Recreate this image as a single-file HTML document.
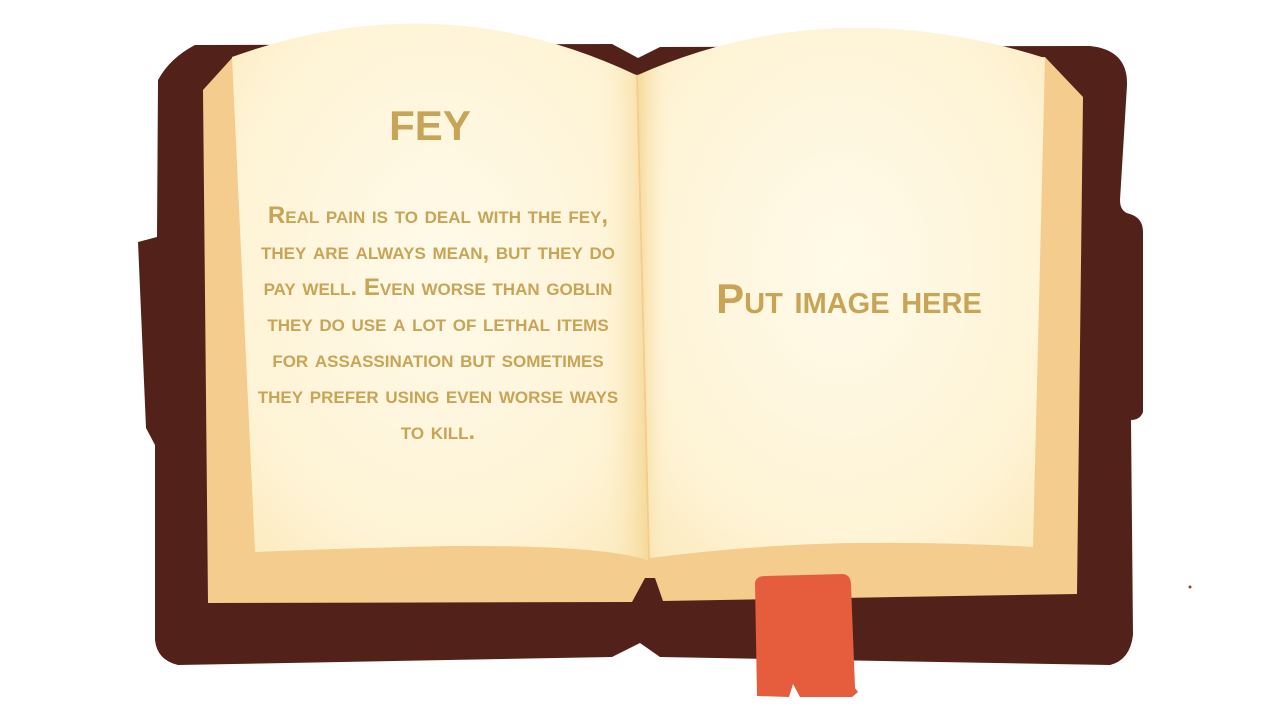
<!DOCTYPE html>
<html><head><meta charset="utf-8"><style>
html,body{margin:0;padding:0;background:#fff;width:1280px;height:720px;overflow:hidden}
svg text{font-family:"Liberation Sans",sans-serif;font-variant:small-caps;fill:#c8a457;font-weight:bold}
</style></head><body>
<svg width="1280" height="720" viewBox="0 0 1280 720">
<defs>
<radialGradient id="pg" cx="50%" cy="45%" r="70%">
<stop offset="0" stop-color="#fffae9"/><stop offset="0.75" stop-color="#fef3d5"/><stop offset="1" stop-color="#fcebbf"/>
</radialGradient>
<linearGradient id="sp" x1="0" x2="1"><stop offset="0.88" stop-color="#fef3d3" stop-opacity="0"/><stop offset="1" stop-color="#f6d999"/></linearGradient>
<linearGradient id="sp2" x1="1" x2="0"><stop offset="0.92" stop-color="#fef3d3" stop-opacity="0"/><stop offset="1" stop-color="#f6d999"/></linearGradient>
</defs>
<path fill="#52221a" d="M195,45 L612,44 L638,58 L660,47 L1090,46 Q1128,50 1127,85 L1120,200 Q1120,212 1130,214 Q1143,218 1143,232 L1143,412 Q1140,420 1131,420 L1133,635 Q1130,660 1110,665 L660,657 L640,643 L612,657 L178,665 Q157,660 155,640 L155,445 L146,428 L138,242 L157,237 L158,80 Q170,58 195,45 Z"/>
<path fill="#f4cc8d" d="M232,58 L203,90 L208,603 L632,602 L645,578 L655,578 L663,601 L1077,594 L1083,97 L1045,57 L640,75 Z"/>
<path fill="url(#pg)" d="M232,57 Q440,-18 636,75 L648,560 Q600,545 450,546 Q350,548 255,552 Z"/>
<path fill="url(#sp)" d="M232,57 Q440,-18 636,75 L648,560 Q600,545 450,546 Q350,548 255,552 Z"/>
<path fill="url(#pg)" d="M638,75 Q830,-10 1045,58 L1033,547 Q950,542 850,543 Q750,545 650,558 Z"/>
<path fill="url(#sp2)" d="M638,75 Q830,-10 1045,58 L1033,547 Q950,542 850,543 Q750,545 650,558 Z"/>
<path fill="#e55d3d" d="M755,583 Q756,576 765,576 L843,574 Q851,575 851,585 L855,688 L858,692 L852,697 L800,697 L793,684 L789,697 L757,696 Z"/>
<circle cx="1190" cy="587" r="1.5" fill="#8b4a2a"/>
<text x="430" y="140" text-anchor="middle" style="font-variant:all-small-caps;font-size:60px">Fey</text>
<g font-size="24" text-anchor="middle">
<text x="438" y="223">Real pain is to deal with the fey,</text>
<text x="438" y="259">they are always mean, but they do</text>
<text x="438" y="295">pay well. Even worse than goblin</text>
<text x="438" y="331">they do use a lot of lethal items</text>
<text x="438" y="367">for assassination but sometimes</text>
<text x="438" y="403">they prefer using even worse ways</text>
<text x="438" y="439">to kill.</text>
</g>
<text x="849" y="313" text-anchor="middle" font-size="42">Put image here</text>
</svg>
</body></html>
